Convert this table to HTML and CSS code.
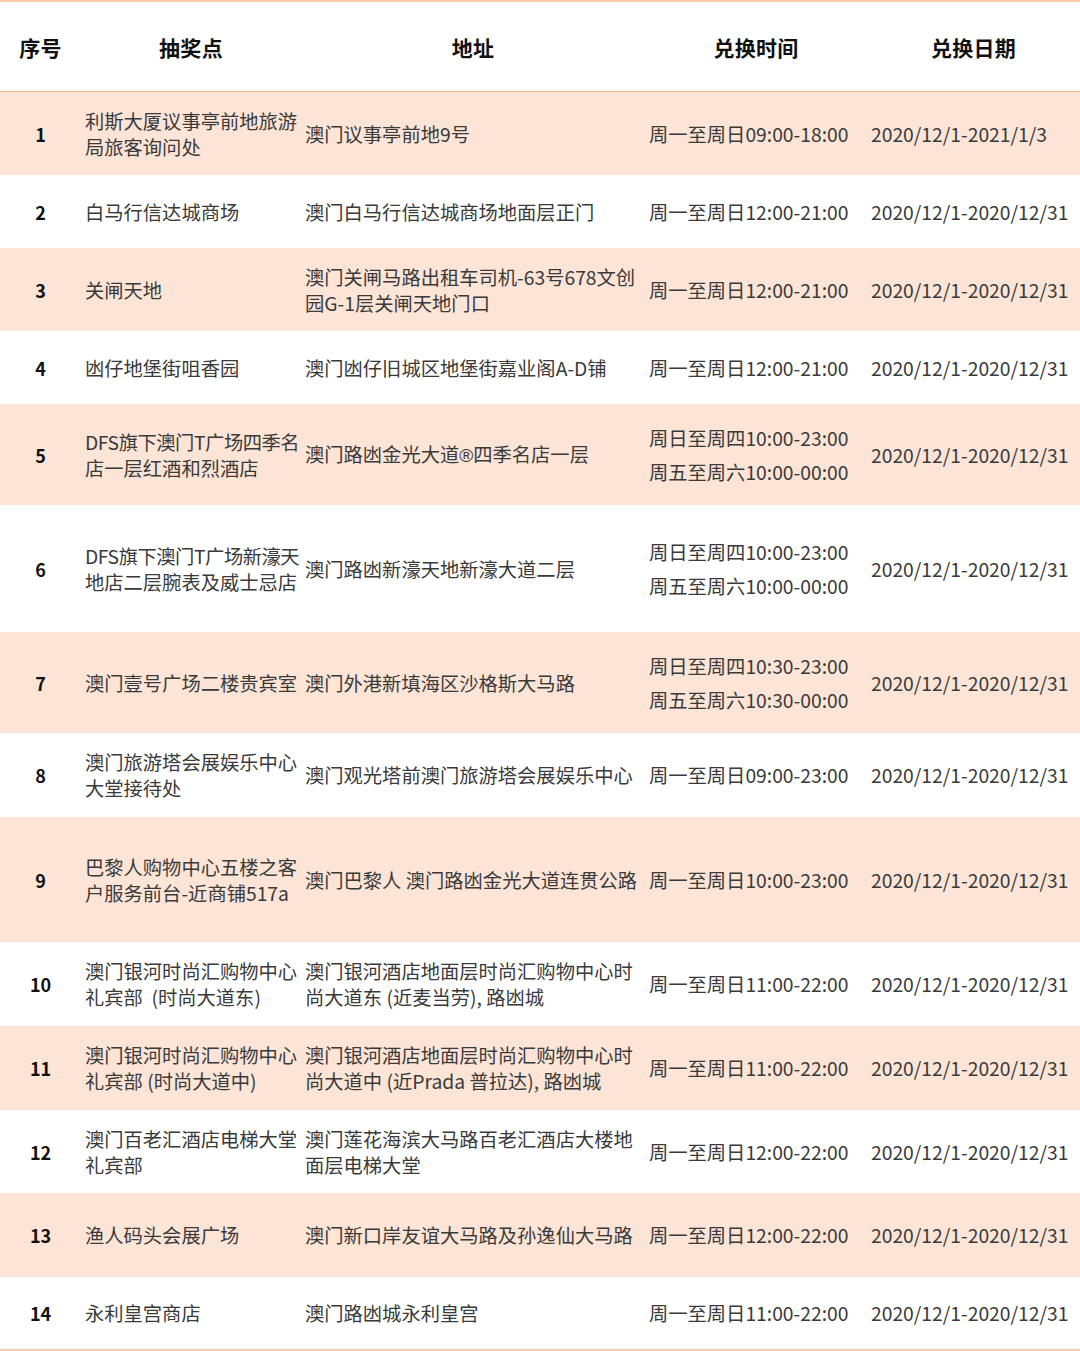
FILE: index.html
```html
<!DOCTYPE html>
<html lang="zh-CN">
<head>
<meta charset="utf-8">
<title>兑换点</title>
<link rel="stylesheet" href="styles.css">
</head>
<body>
<table class="tbl">
  <colgroup>
    <col class="c1"><col class="c2"><col class="c3"><col class="c4"><col class="c5">
  </colgroup>
  <thead>
    <tr class="head">
      <th>序号</th><th>抽奖点</th><th>地址</th><th>兑换时间</th><th>兑换日期</th>
    </tr>
  </thead>
  <tbody>
    <tr class="pink r83">
      <td class="num">1</td><td>利斯大厦议事亭前地旅游<br>局旅客询问处</td><td>澳门议事亭前地9号</td><td>周一至周日09:00-18:00</td><td>2020/12/1-2021/1/3</td>
    </tr>
    <tr class="r73">
      <td class="num">2</td><td>白马行信达城商场</td><td>澳门白马行信达城商场地面层正门</td><td>周一至周日12:00-21:00</td><td>2020/12/1-2020/12/31</td>
    </tr>
    <tr class="pink r83">
      <td class="num">3</td><td>关闸天地</td><td>澳门关闸马路出租车司机-63号678文创<br>园G-1层关闸天地门口</td><td>周一至周日12:00-21:00</td><td>2020/12/1-2020/12/31</td>
    </tr>
    <tr class="r73">
      <td class="num">4</td><td>凼仔地堡街咀香园</td><td>澳门凼仔旧城区地堡街嘉业阁A-D铺</td><td>周一至周日12:00-21:00</td><td>2020/12/1-2020/12/31</td>
    </tr>
    <tr class="pink r101">
      <td class="num">5</td><td><span class="tight">DFS旗下澳门T广场四季名</span><br>店一层红酒和烈酒店</td><td>澳门路凼金光大道<span class="reg">®</span>四季名店一层</td><td><div class="tl">周日至周四10:00-23:00</div><div class="tl">周五至周六10:00-00:00</div></td><td>2020/12/1-2020/12/31</td>
    </tr>
    <tr class="r127">
      <td class="num">6</td><td><span class="tight">DFS旗下澳门T广场新濠天</span><br>地店二层腕表及威士忌店</td><td>澳门路凼新濠天地新濠大道二层</td><td><div class="tl">周日至周四10:00-23:00</div><div class="tl">周五至周六10:00-00:00</div></td><td>2020/12/1-2020/12/31</td>
    </tr>
    <tr class="pink r101">
      <td class="num">7</td><td>澳门壹号广场二楼贵宾室</td><td>澳门外港新填海区沙格斯大马路</td><td><div class="tl">周日至周四10:30-23:00</div><div class="tl">周五至周六10:30-00:00</div></td><td>2020/12/1-2020/12/31</td>
    </tr>
    <tr class="r84">
      <td class="num">8</td><td>澳门旅游塔会展娱乐中心<br>大堂接待处</td><td>澳门观光塔前澳门旅游塔会展娱乐中心</td><td>周一至周日09:00-23:00</td><td>2020/12/1-2020/12/31</td>
    </tr>
    <tr class="pink r125">
      <td class="num">9</td><td>巴黎人购物中心五楼之客<br>户服务前台-近商铺517a</td><td>澳门巴黎人 澳门路凼金光大道连贯公路</td><td>周一至周日10:00-23:00</td><td>2020/12/1-2020/12/31</td>
    </tr>
    <tr class="r84">
      <td class="num">10</td><td>澳门银河时尚汇购物中心<br>礼宾部&nbsp; (时尚大道东)</td><td>澳门银河酒店地面层时尚汇购物中心时<br>尚大道东 (近麦当劳), 路凼城</td><td>周一至周日11:00-22:00</td><td>2020/12/1-2020/12/31</td>
    </tr>
    <tr class="pink r84">
      <td class="num">11</td><td>澳门银河时尚汇购物中心<br>礼宾部 (时尚大道中)</td><td>澳门银河酒店地面层时尚汇购物中心时<br>尚大道中 (近Prada 普拉达), 路凼城</td><td>周一至周日11:00-22:00</td><td>2020/12/1-2020/12/31</td>
    </tr>
    <tr class="r83">
      <td class="num">12</td><td>澳门百老汇酒店电梯大堂<br>礼宾部</td><td>澳门莲花海滨大马路百老汇酒店大楼地<br>面层电梯大堂</td><td>周一至周日12:00-22:00</td><td>2020/12/1-2020/12/31</td>
    </tr>
    <tr class="pink r84">
      <td class="num">13</td><td>渔人码头会展广场</td><td>澳门新口岸友谊大马路及孙逸仙大马路</td><td>周一至周日12:00-22:00</td><td>2020/12/1-2020/12/31</td>
    </tr>
    <tr class="r72">
      <td class="num">14</td><td>永利皇宫商店</td><td>澳门路凼城永利皇宫</td><td>周一至周日11:00-22:00</td><td>2020/12/1-2020/12/31</td>
    </tr>
  </tbody>
</table>
</body>
</html>
```
FILE: styles.css
```css
html, body {
  margin: 0;
  padding: 0;
  background: #ffffff;
}
body {
  width: 1080px;
  height: 1351px;
  overflow: hidden;
  font-family: "Noto Sans CJK SC", "Noto Sans", sans-serif;
}
.tbl {
  width: 1080px;
  table-layout: fixed;
  border-collapse: collapse;
  border-top: 2px solid #f8cbad;
  border-bottom: 2px solid #f8cbad;
}
.c1 { width: 81px; }
.c2 { width: 220px; }
.c3 { width: 344px; }
.c4 { width: 222px; }
.c5 { width: 213px; }

.head th {
  height: 89px;
  padding: 0;
  font-size: 21px;
  font-weight: bold;
  color: #111111;
  text-align: center;
  vertical-align: middle;
  border-bottom: 1px solid #f4b183;
  letter-spacing: 0.3px;
}
td {
  padding: 0 4px;
  font-size: 19.3px;
  letter-spacing: 0;
  line-height: 26px;
  color: #3a3a3a;
  text-align: left;
  vertical-align: middle;
  white-space: nowrap;
  overflow: visible;
}
td.num {
  padding: 0;
  text-align: center;
  font-weight: bold;
  font-size: 18px;
  color: #111111;
}
.pink td { background: #fce4d6; }
.tl { line-height: 34px; }
.tight { letter-spacing: -0.45px; }
.reg {
  font-family: "Liberation Sans", sans-serif;
  font-size: 19px;
}

.r72 td { height: 72px; }
.r73 td { height: 73px; }
.r83 td { height: 83px; }
.r84 td { height: 84px; }
.r101 td { height: 101px; }
.r125 td { height: 125px; }
.r127 td { height: 127px; }
```
